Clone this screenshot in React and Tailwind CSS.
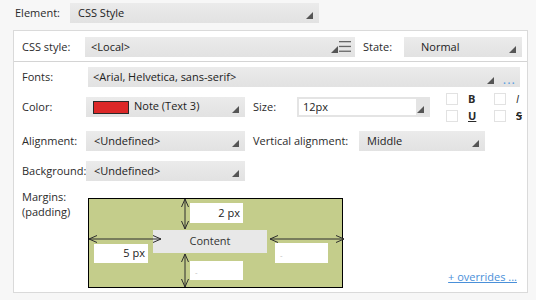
import React from "react";

const font = { fontFamily: '"Open Sans", "Noto Sans", sans-serif' };

function Corner() {
  return (
    <svg width="7" height="7" viewBox="0 0 7 7" className="absolute right-[6px] bottom-[4px]">
      <polygon points="7,0 7,7 0,7" fill="#555" />
    </svg>
  );
}

function Select({ value, className = "", children }) {
  return (
    <div className={`relative h-[20px] bg-gradient-to-b from-[#ebebeb] to-[#e2e2e2] flex items-center pl-[8px] text-[#222] ${className}`}>
      {children ?? value}
      <Corner />
    </div>
  );
}

function Check({ label, className = "" }) {
  return (
    <div className="flex items-center gap-[10px] h-[13px]">
      <div className="w-[12px] h-[12px] border border-[#e2e2e2] bg-white" />
      <span className={`w-[6px] text-[11px] font-bold leading-none text-[#2a2a2a] ${className}`}>{label}</span>
    </div>
  );
}

function Arrow({ x1, y1, x2, y2 }) {
  const horiz = y1 === y2;
  const h = 5;
  return (
    <g stroke="#2d2d2d" strokeWidth="1" fill="none">
      <line x1={x1} y1={y1} x2={x2} y2={y2} />
      {horiz ? (
        <>
          <polyline points={`${x1 + h * 1.6},${y1 - h * 0.7} ${x1},${y1} ${x1 + h * 1.6},${y1 + h * 0.7}`} />
          <polyline points={`${x2 - h * 1.6},${y2 - h * 0.7} ${x2},${y2} ${x2 - h * 1.6},${y2 + h * 0.7}`} />
        </>
      ) : (
        <>
          <polyline points={`${x1 - h * 0.7},${y1 + h * 1.6} ${x1},${y1} ${x1 + h * 0.7},${y1 + h * 1.6}`} />
          <polyline points={`${x2 - h * 0.7},${y2 - h * 1.6} ${x2},${y2} ${x2 + h * 0.7},${y2 - h * 1.6}`} />
        </>
      )}
    </g>
  );
}

function PadInput({ value, className }) {
  return (
    <div className={`absolute bg-white flex items-center ${value ? "justify-end pr-[3px] text-[#222]" : "pl-[5px] text-[#bbb] text-[8px] pt-[3px]"} ${className}`}>
      {value || "-"}
    </div>
  );
}

export default function App() {
  return (
    <div className="w-[536px] h-[300px] bg-[#f7f7f7] text-[11px] text-[#2b2b2b] overflow-hidden" style={font}>
      {/* element row */}
      <div className="h-[30px] pt-[3px] flex items-start">
        <div className="w-[70px] pl-[15px] leading-[20px]">Element:</div>
        <Select value="CSS Style" className="w-[249px]" />
      </div>

      <div className="ml-[13px] w-[515px] h-[263px] border border-[#dadada] bg-white">
        {/* css style row */}
        <div className="h-[31px] border-b border-[#d4d4d4] flex items-start pt-[6px]">
          <div className="w-[71px] pl-[8px] leading-[20px]">CSS style:</div>
          <div className="relative w-[270px] h-[20px] bg-gradient-to-b from-[#ebebeb] to-[#e2e2e2] flex items-center pl-[6px] text-[#222]">
            &lt;Local&gt;
            <svg width="7" height="7" viewBox="0 0 7 7" className="absolute right-[17px] bottom-[4px]">
              <polygon points="7,0 7,7 0,7" fill="#555" />
            </svg>
            <svg width="12" height="11" viewBox="0 0 12 11" className="absolute right-[4px] top-[4px]">
              <rect x="0" y="0" width="12" height="1.3" fill="#666" />
              <rect x="0" y="4.8" width="12" height="1.3" fill="#666" />
              <rect x="0" y="9.6" width="12" height="1.3" fill="#666" />
            </svg>
          </div>
          <div className="w-[49px] pl-[8px] leading-[20px]">State:</div>
          <Select value="Normal" className="w-[118px] pl-[17px]" />
        </div>

        {/* fonts row */}
        <div className="flex items-start mt-[5px]">
          <div className="w-[74px] pl-[8px] leading-[20px]">Fonts:</div>
          <div className="relative w-[432px] h-[20px] bg-gradient-to-b from-[#ebebeb] to-[#e2e2e2] flex items-center pl-[5px] text-[#222]">
            &lt;Arial, Helvetica, sans-serif&gt;
            <svg width="7" height="7" viewBox="0 0 7 7" className="absolute right-[26px] bottom-[3px]">
              <polygon points="7,0 7,7 0,7" fill="#555" />
            </svg>
            <span className="absolute right-[4px] bottom-[1px] text-[#5aa0e0] text-[13px] leading-none tracking-[1px]">...</span>
          </div>
        </div>

        {/* color row */}
        <div className="flex items-start">
          <div className="w-[72px] pl-[8px] leading-[20px] mt-[10px]">Color:</div>
          <div className="relative w-[159px] h-[20px] mt-[10px] bg-gradient-to-b from-[#ebebeb] to-[#e2e2e2] flex items-center pl-[7px] text-[#222]">
            <div className="w-[36px] h-[13px] bg-[#dc2828] border border-[#2a2a2a] mr-[5px]" />
            <span className="-mt-[2px]">Note (Text 3)</span>
            <Corner />
          </div>
          <div className="w-[52px] pl-[8px] leading-[20px] mt-[10px]">Size:</div>
          <div className="relative w-[133px] h-[20px] mt-[10px] bg-[#e4e4e4] p-[2px] pr-[14px]">
            <div className="h-full bg-white flex items-center pl-[4px] text-[#222]">12px</div>
            <Corner />
          </div>
          <div className="ml-[16px] mt-[5px] flex flex-col gap-[4px]">
            <Check label="B" />
            <Check label="U" className="underline" />
          </div>
          <div className="ml-[20px] mt-[5px] flex flex-col gap-[4px]">
            <Check label="I" className="italic font-normal" />
            <Check label="S" className="line-through" />
          </div>
        </div>

        {/* alignment row */}
        <div className="flex items-start mt-[9px]">
          <div className="w-[72px] pl-[8px] leading-[20px]">Alignment:</div>
          <Select value="<Undefined>" className="w-[159px]" />
          <div className="w-[114px] pl-[8px] leading-[20px]">Vertical alignment:</div>
          <Select value="Middle" className="w-[126px]" />
        </div>

        {/* background row */}
        <div className="flex items-start mt-[10px]">
          <div className="w-[72px] pl-[8px] leading-[20px]">Background:</div>
          <Select value="<Undefined>" className="w-[159px] pl-[5px]" />
        </div>

        {/* margins */}
        <div className="flex items-start mt-[17px]">
          <div className="w-[74px] pl-[8px] leading-[15px] -mt-[9px]">
            <div>Margins:</div>
            <div>(padding)</div>
          </div>
          <div className="relative w-[255px] h-[90px] bg-[#c4cd8b] border border-black">
            <div className="absolute left-[64px] top-[31px] w-[114px] h-[23px] bg-[#e8e8e8] flex items-center justify-center text-[#333]">
              Content
            </div>
            <PadInput value="2 px" className="left-[101px] top-[4px] w-[53px] h-[20px]" />
            <PadInput value="5 px" className="left-[5px] top-[45px] w-[54px] h-[19px]" />
            <PadInput value="" className="left-[186px] top-[44px] w-[53px] h-[20px]" />
            <PadInput value="" className="left-[101px] top-[62px] w-[53px] h-[19px]" />
            <svg width="257" height="90" className="absolute -left-[1px] -top-[1px] overflow-visible">
              <Arrow x1={97} y1={1} x2={97} y2={31} />
              <Arrow x1={97} y1={56} x2={97} y2={89} />
              <Arrow x1={1} y1={41} x2={73} y2={41} />
              <Arrow x1={182} y1={41} x2={256} y2={41} />
            </svg>
          </div>
          <div className="flex-1 flex justify-end pr-[10px] pt-[73px]">
            <span className="text-[#4a90d9] underline leading-none">+ overrides ...</span>
          </div>
        </div>
      </div>
    </div>
  );
}
